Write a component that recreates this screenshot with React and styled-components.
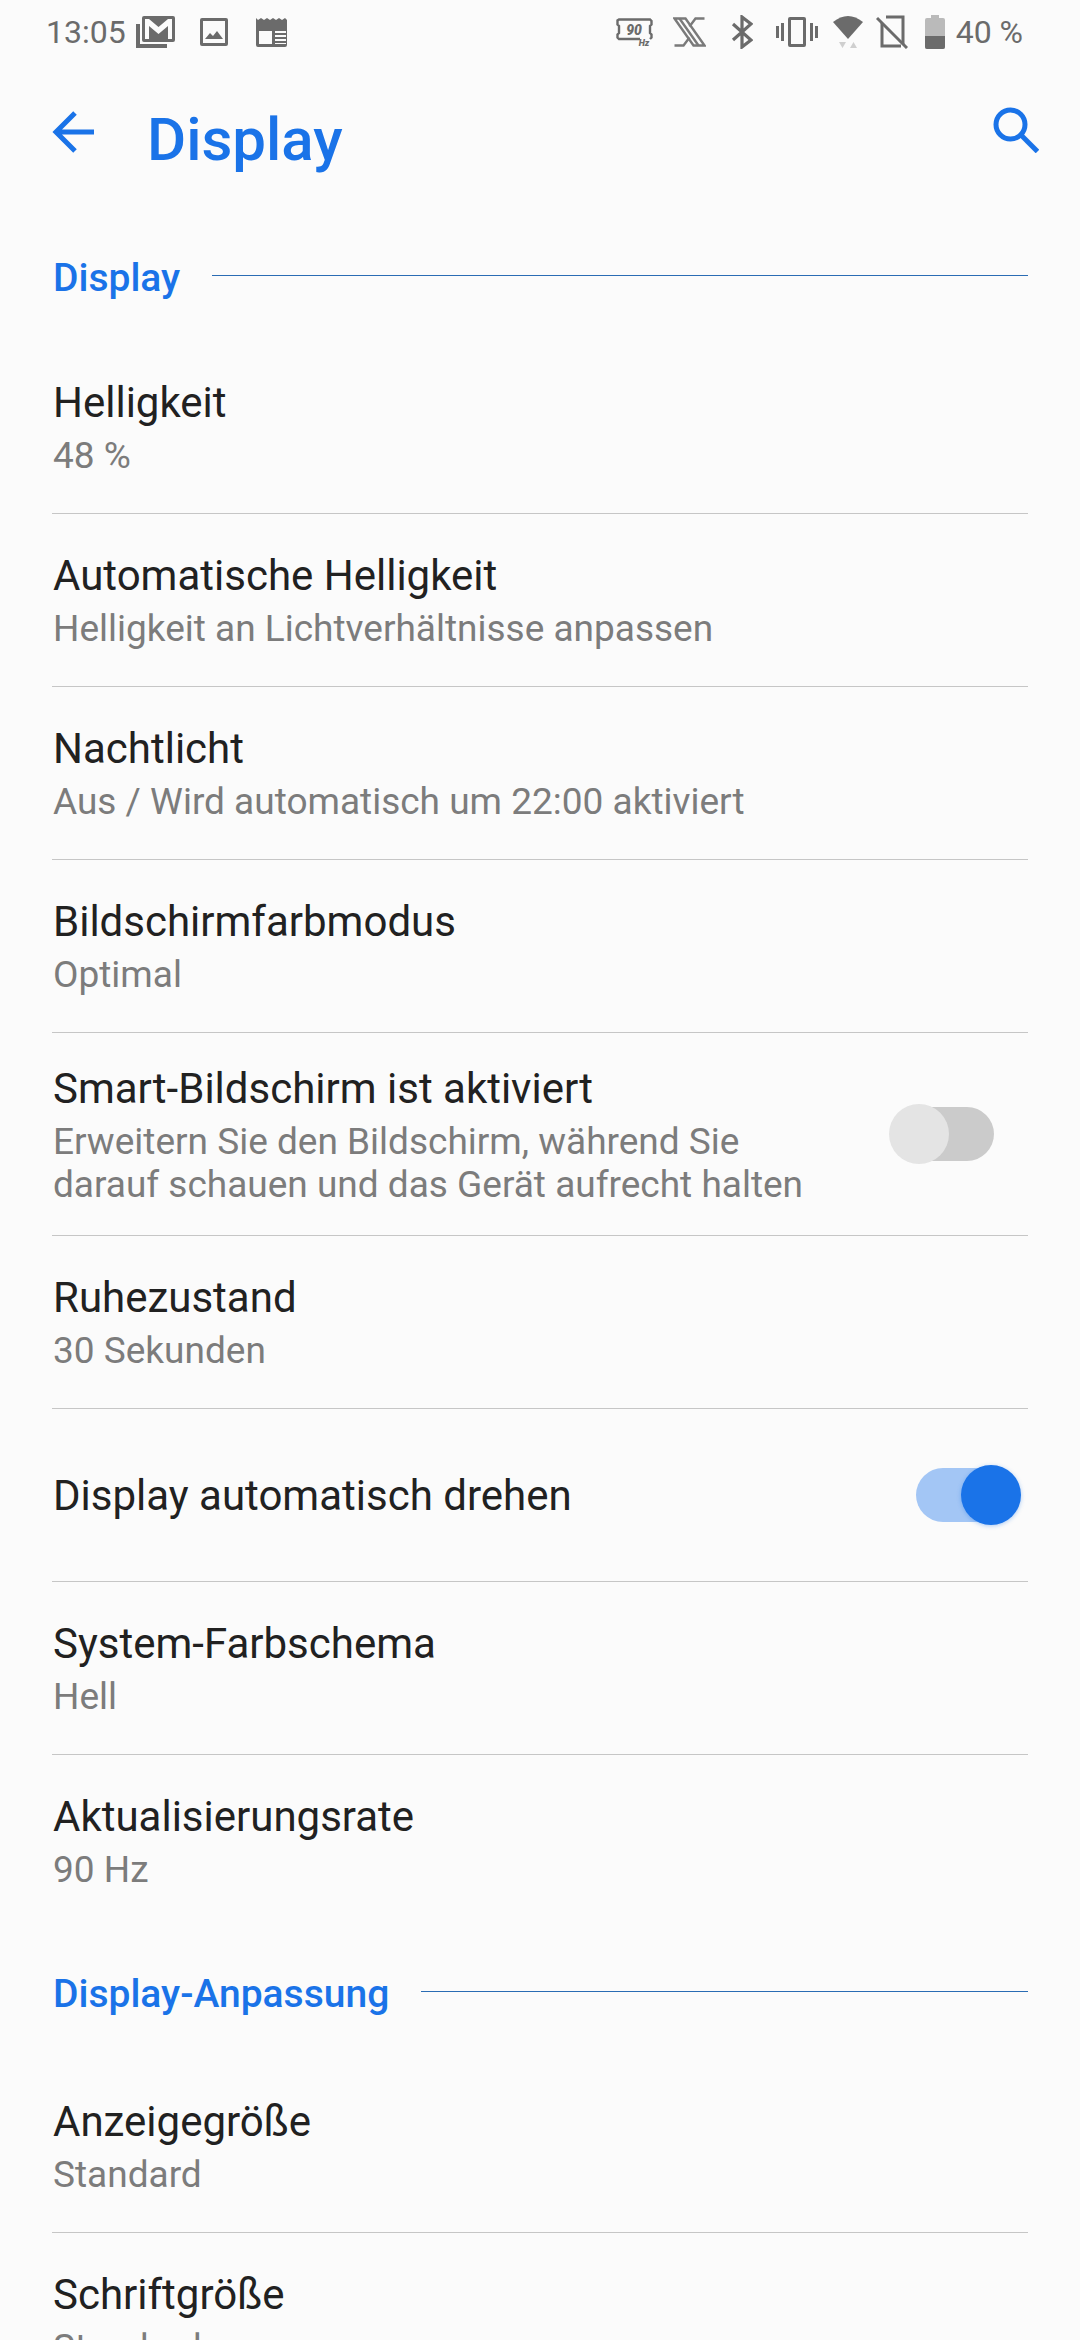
import React from 'react';
import styled, { createGlobalStyle } from 'styled-components';

const GlobalStyle = createGlobalStyle`
  html, body {
    margin: 0;
    padding: 0;
    background: #fbfbfb;
  }
  body {
    font-family: Roboto, "Noto Sans", sans-serif;
    overflow: hidden;
  }
`;

const Screen = styled.div`
  width: 1080px;
  height: 2340px;
  overflow: hidden;
  background: #fbfbfb;
`;

const StatusBar = styled.div`
  height: 64px;
  padding: 0 57px 0 46px;
  display: flex;
  align-items: center;
  justify-content: space-between;
  color: #6b6b6b;
  font-size: 32px;
`;

const StatusGroup = styled.div`
  display: flex;
  align-items: center;
`;

const StatusSlot = styled.span`
  display: flex;
  align-items: center;
  line-height: 1;
  margin-left: ${p => p.$left || 0}px;
`;

const AppBar = styled.div`
  height: 150px;
  padding: 0 41px 0 52px;
  display: flex;
  align-items: center;
`;

const IconButton = styled.div`
  display: flex;
  color: #1a73e8;
  margin-bottom: ${p => p.$lift}px;
`;

const Title = styled.h1`
  margin: 0 0 0 53px;
  flex: 1;
  font-size: 60px;
  font-weight: 500;
  color: #1a73e8;
`;

const SectionHeader = styled.div`
  height: 127px;
  margin: ${p => p.$space || 0}px 0;
  padding: 0 52px 0 53px;
  display: flex;
  align-items: center;
  gap: 32px;
  font-size: 39px;
  font-weight: 500;
  color: #1a73e8;

  &::after {
    content: '';
    flex: 1;
    height: 1px;
    background: #2a6cb4;
    margin-top: -4px;
  }
`;

const Row = styled.div`
  height: ${p => p.$height || 172}px;
  margin: 0 52px;
  display: flex;
  align-items: center;
  justify-content: space-between;
  border-bottom: ${p => (p.$last ? 'none' : '1px solid #c6c6c6')};
`;

const RowText = styled.div`
  display: flex;
  flex-direction: column;
  padding: 1px 0 0 1px;
`;

const RowTitle = styled.div`
  font-size: 42px;
  line-height: 50px;
  color: #212121;
`;

const RowSummary = styled.div`
  font-size: 37px;
  line-height: 43px;
  color: #7c7c7c;
  margin-top: 6px;
  white-space: pre-line;
`;

const SwitchTrack = styled.div`
  position: relative;
  width: 90px;
  height: 54px;
  border-radius: 27px;
  margin-right: ${p => p.$gutter}px;
  background: ${p => (p.$on ? '#a3c6f5' : '#cbcbcb')};
`;

const SwitchThumb = styled.div`
  position: absolute;
  top: -3px;
  width: 60px;
  height: 60px;
  border-radius: 50%;
  ${p => (p.$on ? 'right: -15px;' : 'left: -15px;')}
  background: ${p => (p.$on ? '#1a73e8' : '#e4e4e4')};
  box-shadow: ${p => (p.$on ? '0 1px 4px rgba(26, 115, 232, 0.35)' : 'none')};
`;

const MailIcon = () => (
  <svg width="39" height="32" viewBox="0 0 39 32" fill="currentColor">
    <path d="M0 8h4v20h27v4H0z" />
    <path d="M8 0h29a2 2 0 0 1 2 2v22a2 2 0 0 1-2 2H8a2 2 0 0 1-2-2V2a2 2 0 0 1 2-2zm1 3v20h4V10l9.500 8L32 10v13h4V3h-4l-9.500 8L13 3z" fillRule="evenodd" />
  </svg>
);

const PhotoIcon = () => (
  <svg width="30" height="30" viewBox="0 0 30 30" fill="currentColor">
    <path d="M3 1h24a2 2 0 0 1 2 2v24a2 2 0 0 1-2 2H3a2 2 0 0 1-2-2V3a2 2 0 0 1 2-2zm1 3v22h22V4z" fillRule="evenodd" />
    <path d="M6 22l5-6 3 3 4-5 6 8z" />
  </svg>
);

const NewsIcon = () => (
  <svg width="33" height="30" viewBox="0 0 33 30" fill="currentColor">
    <path d="M0 1l2 2 3-2 3 2 3-2 3 2 3-2 3 2 3-2 3 2 3-2 2 2V28a2 2 0 0 1-2 2H2a2 2 0 0 1-2-2zm3 13v13h13V14zm16 0v2h11v-2zm0 4v2h11v-2zm0 4v2h11v-2zm0 4v1h11v-1z" fillRule="evenodd" />
  </svg>
);

const RateIcon = () => (
  <svg width="37" height="28" viewBox="0 0 37 28" fill="none">
    <path d="M24 21H3l-1.500-1.500v-3l1.500-1.500V8L1.500 6.500v-4L3 1.500h31L35.500 3v3.500L34 8v7l1.500 1.500v3L34 21" stroke="currentColor" strokeWidth="2.400" />
    <text x="18" y="16.500" textAnchor="middle" fontSize="14" fontWeight="900" fontStyle="italic" fill="currentColor" fontFamily="Roboto">90</text>
    <text x="28" y="27.500" textAnchor="middle" fontSize="9" fontWeight="900" fontStyle="italic" fill="currentColor" fontFamily="Roboto">Hz</text>
  </svg>
);

const XIcon = () => (
  <svg width="33" height="30" viewBox="0 0 33 30" fill="none" stroke="#7a7a7a" strokeWidth="2.400">
    <path d="M1.500 1.500h11l19 27h-11z" />
    <path d="M6.500 1.500l19 27M31.500 1.500h-9l-6 8M1.500 28.500h9l6-8" />
  </svg>
);

const BluetoothIcon = () => (
  <svg width="22" height="34" viewBox="0 0 22 34" fill="none" stroke="currentColor" strokeWidth="3.200">
    <path d="M2 9l18 16-9 7V2l9 7L2 25" />
  </svg>
);

const VibrateIcon = () => (
  <svg width="42" height="30" viewBox="0 0 42 30" fill="currentColor">
    <path d="M0 9h3v12H0zM5 6h3v18H5zM34 6h3v18h-3zM39 9h3v12h-3z" />
    <path d="M14 0h14a2 2 0 0 1 2 2v26a2 2 0 0 1-2 2H14a2 2 0 0 1-2-2V2a2 2 0 0 1 2-2zm1 3v24h12V3z" fillRule="evenodd" />
  </svg>
);

const WifiIcon = () => (
  <svg width="30" height="32" viewBox="0 0 30 32" fill="currentColor">
    <path d="M0 6Q15 -6 30 6L15 23z" />
    <path d="M6 26h7l-3.500 6zM17 32l3.500-6 3.500 6z" opacity="0.3" />
  </svg>
);

const NoSimIcon = () => (
  <svg width="32" height="34" viewBox="0 0 32 34" fill="none" stroke="currentColor" strokeWidth="3">
    <path d="M10 2h17v27M25 31H6V8" />
    <path d="M1 3l30 30" />
  </svg>
);

const BatteryIcon = () => (
  <svg width="20" height="34" viewBox="0 0 20 34" fill="currentColor">
    <path d="M6 0h8v3h4a2 2 0 0 1 2 2v27a2 2 0 0 1-2 2H2a2 2 0 0 1-2-2V5a2 2 0 0 1 2-2h4z" opacity="0.45" />
    <path d="M0 21h20v11a2 2 0 0 1-2 2H2a2 2 0 0 1-2-2z" />
  </svg>
);

const BackIcon = () => (
  <svg width="42" height="42" viewBox="0 0 42 42" fill="none" stroke="currentColor" strokeWidth="5">
    <path d="M42 21H4M23 2L4 21l19 19" />
  </svg>
);

const SearchIcon = () => (
  <svg width="46" height="46" viewBox="0 0 46 46" fill="none" stroke="currentColor" strokeWidth="5">
    <circle cx="17.500" cy="17.500" r="14.500" />
    <path d="M28 28l16.500 16.500" />
  </svg>
);

const Switch = ({ on, gutter }) => (
  <SwitchTrack $on={on} $gutter={gutter}>
    <SwitchThumb $on={on} />
  </SwitchTrack>
);

const displayRows = [
  { title: 'Helligkeit', summary: '48 %' },
  { title: 'Automatische Helligkeit', summary: 'Helligkeit an Lichtverhältnisse anpassen' },
  { title: 'Nachtlicht', summary: 'Aus / Wird automatisch um 22:00 aktiviert' },
  { title: 'Bildschirmfarbmodus', summary: 'Optimal' },
  {
    title: 'Smart-Bildschirm ist aktiviert',
    summary: 'Erweitern Sie den Bildschirm, während Sie\ndarauf schauen und das Gerät aufrecht halten',
    toggle: 'off',
    height: 202,
  },
  { title: 'Ruhezustand', summary: '30 Sekunden' },
  { title: 'Display automatisch drehen', toggle: 'on' },
  { title: 'System-Farbschema', summary: 'Hell' },
  { title: 'Aktualisierungsrate', summary: '90 Hz', last: true },
];

const adjustRows = [
  { title: 'Anzeigegröße', summary: 'Standard' },
  { title: 'Schriftgröße', summary: 'Standard', last: true },
];

const SettingRow = ({ title, summary, toggle, height, last }) => (
  <Row $height={height} $last={last}>
    <RowText>
      <RowTitle>{title}</RowTitle>
      {summary && <RowSummary>{summary}</RowSummary>}
    </RowText>
    {toggle && <Switch on={toggle === 'on'} gutter={toggle === 'on' ? 22 : 34} />}
  </Row>
);

export default function App() {
  return (
    <Screen>
      <GlobalStyle />
      <StatusBar>
        <StatusGroup>
          <StatusSlot>13:05</StatusSlot>
          <StatusSlot $left={10}><MailIcon /></StatusSlot>
          <StatusSlot $left={24}><PhotoIcon /></StatusSlot>
          <StatusSlot $left={27}><NewsIcon /></StatusSlot>
        </StatusGroup>
        <StatusGroup>
          <StatusSlot><RateIcon /></StatusSlot>
          <StatusSlot $left={20}><XIcon /></StatusSlot>
          <StatusSlot $left={25}><BluetoothIcon /></StatusSlot>
          <StatusSlot $left={23}><VibrateIcon /></StatusSlot>
          <StatusSlot $left={15}><WifiIcon /></StatusSlot>
          <StatusSlot $left={13}><NoSimIcon /></StatusSlot>
          <StatusSlot $left={17}><BatteryIcon /></StatusSlot>
          <StatusSlot $left={11}>40 %</StatusSlot>
        </StatusGroup>
      </StatusBar>

      <AppBar>
        <IconButton $lift={15}><BackIcon /></IconButton>
        <Title>Display</Title>
        <IconButton $lift={19}><SearchIcon /></IconButton>
      </AppBar>

      <SectionHeader>Display</SectionHeader>
      {displayRows.map(row => <SettingRow key={row.title} {...row} />)}

      <SectionHeader $space={3}>Display-Anpassung</SectionHeader>
      {adjustRows.map(row => <SettingRow key={row.title} {...row} />)}
    </Screen>
  );
}
